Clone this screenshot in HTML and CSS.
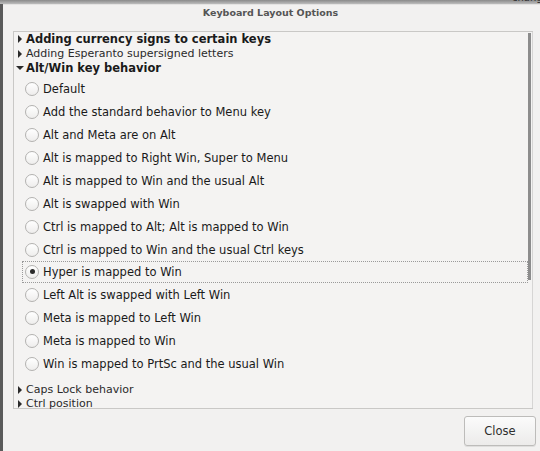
FILE: index.html
```html
<!DOCTYPE html>
<html>
<head>
<meta charset="utf-8">
<link rel="stylesheet" href="styles.css">
</head>
<body>
<div class="desktop">
  <div class="behind"><span class="behind-text">chang</span></div>
  <div class="dialog">
    <div class="titlebar">Keyboard Layout Options</div>
    <div class="frame">
      <div class="list">
        <div class="group bold"><span class="tri right"></span>Adding currency signs to certain keys</div>
        <div class="group"><span class="tri right"></span>Adding Esperanto supersigned letters</div>
        <div class="group bold"><span class="tri down"></span>Alt/Win key behavior</div>
        <div class="options">
          <div class="opt"><span class="radio"></span>Default</div>
          <div class="opt"><span class="radio"></span>Add the standard behavior to Menu key</div>
          <div class="opt"><span class="radio"></span>Alt and Meta are on Alt</div>
          <div class="opt"><span class="radio"></span>Alt is mapped to Right Win, Super to Menu</div>
          <div class="opt"><span class="radio"></span>Alt is mapped to Win and the usual Alt</div>
          <div class="opt"><span class="radio"></span>Alt is swapped with Win</div>
          <div class="opt"><span class="radio"></span>Ctrl is mapped to Alt; Alt is mapped to Win</div>
          <div class="opt"><span class="radio"></span>Ctrl is mapped to Win and the usual Ctrl keys</div>
          <div class="opt focus"><span class="radio checked"></span>Hyper is mapped to Win</div>
          <div class="opt"><span class="radio"></span>Left Alt is swapped with Left Win</div>
          <div class="opt"><span class="radio"></span>Meta is mapped to Left Win</div>
          <div class="opt"><span class="radio"></span>Meta is mapped to Win</div>
          <div class="opt"><span class="radio"></span>Win is mapped to PrtSc and the usual Win</div>
        </div>
        <div class="group after"><span class="tri right"></span>Caps Lock behavior</div>
        <div class="group"><span class="tri right"></span>Ctrl position</div>
      </div>
      <div class="scrollbar"><div class="thumb"></div></div>
    </div>
    <div class="actions"><button class="btn">Close</button></div>
  </div>
</div>
</body>
</html>
```
FILE: styles.css
```css
html, body {
  margin: 0;
  padding: 0;
}
body {
  width: 540px;
  height: 451px;
  overflow: hidden;
  background: #5a5a5a;
  font-family: "DejaVu Sans", sans-serif;
}
.desktop {
  position: relative;
  width: 540px;
  height: 451px;
  display: flex;
  flex-direction: column;
}
.behind {
  height: 4px;
  background: linear-gradient(#8a8a8a, #bdbdbd);
  overflow: hidden;
  position: relative;
}
.behind-text {
  position: absolute;
  left: 512px;
  top: -7px;
  font-size: 10px;
  line-height: 10px;
  color: #333;
}
.dialog {
  flex: 1;
  margin-left: 3px;
  background: #f2f1f0;
  display: flex;
  flex-direction: column;
  border-top: 1px solid #e4e3e2;
}
.titlebar {
  height: 22px;
  line-height: 15px;
  text-align: center;
  font-size: 9.5px;
  font-weight: bold;
  color: #555;
  padding-right: 2px;
}
.frame {
  margin: 4px 7px 0 10px;
  height: 376px;
  border: 1px solid #c9c8c6;
  border-right: none;
  display: flex;
  background: #f4f3f2;
}
.list {
  flex: 1;
  font-size: 11.5px;
  color: #1a1a1a;
}
.group {
  height: 14.5px;
  line-height: 14.5px;
  display: flex;
  align-items: center;
  padding-left: 3px;
  white-space: nowrap;
  font-size: 11px;
  color: #2a2a2a;
}
.group.bold {
  font-weight: bold;
  font-size: 11.5px;
  color: #1a1a1a;
}
.group.after {
  margin-top: 7px;
}
.tri {
  width: 0;
  height: 0;
}
.tri.right {
  border-top: 4px solid transparent;
  border-bottom: 4px solid transparent;
  border-left: 4px solid #2a2a2a;
  margin-left: 1px;
  margin-right: 4px;
}
.tri.down {
  border-left: 4px solid transparent;
  border-right: 4px solid transparent;
  border-top: 4px solid #2a2a2a;
  margin-left: -1px;
  margin-right: 2px;
}
.options {
  padding-top: 2px;
}
.opt {
  height: 23px;
  display: flex;
  align-items: center;
  margin-left: 8px;
  margin-right: 0;
  padding-left: 3px;
  white-space: nowrap;
  font-size: 11.5px;
  box-sizing: border-box;
}
.opt.focus {
  border: 1px dotted #9a9a9a;
  padding-left: 2px;
  height: 22px;
  margin-top: -1px;
  margin-bottom: 1px;
}
.radio {
  width: 14px;
  height: 14px;
  border: 1px solid #b3b2b0;
  border-radius: 50%;
  background: linear-gradient(#ffffff, #eeedec);
  margin-right: 4px;
  box-sizing: border-box;
  display: flex;
  align-items: center;
  justify-content: center;
}
.radio.checked::after {
  content: "";
  width: 5px;
  height: 5px;
  border-radius: 50%;
  background: #2a2a2a;
}
.scrollbar {
  width: 4px;
  display: flex;
  flex-direction: column;
  padding-top: 1px;
  border-right: 1px solid #d6d5d4;
}
.thumb {
  width: 3px;
  height: 247px;
  background: #8c8c8c;
}
.actions {
  display: flex;
  justify-content: flex-end;
  padding: 7px 4px 0 0;
}
.btn {
  width: 72px;
  height: 30px;
  border: 1px solid #bdbcba;
  border-radius: 3px;
  background: linear-gradient(#fbfbfb, #ecebea);
  font-family: "DejaVu Sans", sans-serif;
  font-size: 11.5px;
  color: #2e2e2e;
  box-shadow: 0 1px 0 rgba(0,0,0,0.08);
}
```
